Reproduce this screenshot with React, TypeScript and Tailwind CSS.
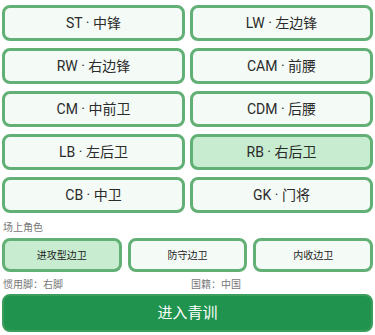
import React from "react";

const positions = [
  ["ST · 中锋", false],
  ["LW · 左边锋", false],
  ["RW · 右边锋", false],
  ["CAM · 前腰", false],
  ["CM · 中前卫", false],
  ["CDM · 后腰", false],
  ["LB · 左后卫", false],
  ["RB · 右后卫", true],
  ["CB · 中卫", false],
  ["GK · 门将", false],
] as const;

const roles = [
  ["进攻型边卫", true],
  ["防守边卫", false],
  ["内收边卫", false],
] as const;

export default function App() {
  return (
    <div
      className="w-[375px] h-[335px] bg-white px-[2px] pt-[5px] overflow-hidden"
      style={{ fontFamily: 'Roboto, "Noto Sans CJK SC", sans-serif' }}
    >
      <div className="grid grid-cols-2 gap-x-[5px] gap-y-[7px]">
        {positions.map(([label, sel]) => (
          <div
            key={label}
            className={
              "h-[36px] rounded-[8px] border-[3px] border-[#62b075] flex items-center justify-center text-[14px] text-[#2b2b2b] " +
              (sel ? "bg-[#c7ecd0]" : "bg-[#f4faf6]")
            }
          >
            {label}
          </div>
        ))}
      </div>
      <div className="mt-[8px] text-[10px] leading-[13px] text-[#777777] pl-[1px]">场上角色</div>
      <div className="mt-[4px] grid grid-cols-3 gap-x-[6px]">
        {roles.map(([label, sel]) => (
          <div
            key={label}
            className={
              "h-[34px] rounded-[8px] border-[3px] border-[#62b075] flex items-center justify-center text-[10px] text-[#222222] " +
              (sel ? "bg-[#c7ecd0]" : "bg-[#f4faf6]")
            }
          >
            {label}
          </div>
        ))}
      </div>
      <div className="mt-[6px] grid grid-cols-2 gap-x-[5px] text-[10px] leading-[13px] text-[#777777]">
        <div className="pl-[1px]">惯用脚：右脚</div>
        <div className="pl-[1px]">国籍：中国</div>
      </div>
      <div className="mt-[3px] h-[38px] rounded-[8px] border-[2px] border-[#3c9d5d] bg-[#20944e] flex items-center justify-center text-[15px] text-white">
        进入青训
      </div>
    </div>
  );
}
